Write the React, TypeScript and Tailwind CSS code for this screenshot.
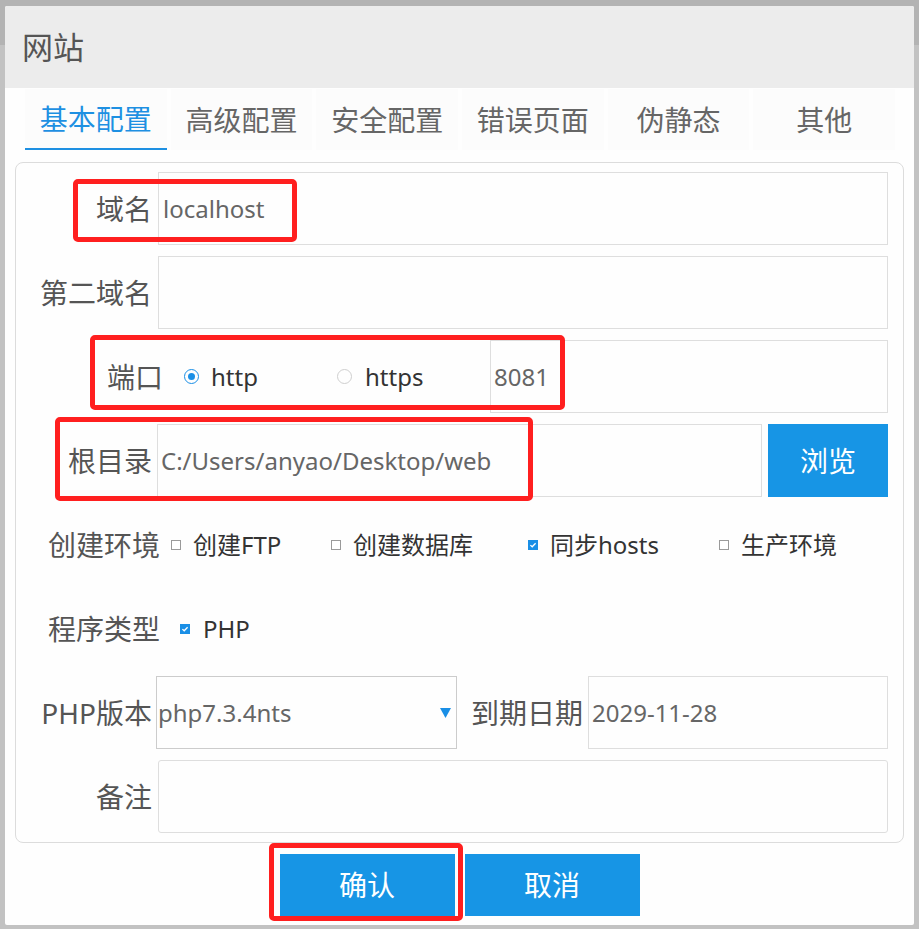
import React from 'react';

const tabs = ['基本配置', '高级配置', '安全配置', '错误页面', '伪静态', '其他'];

const Field: React.FC<{ value?: string; className?: string }> = ({ value = '', className = '' }) => (
  <div className={`h-full flex items-center pl-[3px] border border-[#dedede] bg-[#fefefe] text-[24px] text-[#666] ${className}`}>
    {value}
  </div>
);

const Label: React.FC<{ text: string; className: string }> = ({ text, className }) => (
  <div className={`shrink-0 text-right text-[28px] text-[#555] ${className}`}>{text}</div>
);

const Check: React.FC<{ on?: boolean }> = ({ on }) =>
  on ? (
    <span className="w-[10px] h-[10px] bg-[#1a8fe6] flex items-center justify-center shrink-0">
      <svg width="8" height="8" viewBox="0 0 8 8">
        <path d="M1.4 4.1 L3.2 5.8 L6.6 2.3" stroke="white" strokeWidth="1.3" fill="none" />
      </svg>
    </span>
  ) : (
    <span className="w-[10px] h-[10px] border border-[#9a9a9a] bg-white shrink-0" />
  );

const Radio: React.FC<{ on?: boolean }> = ({ on }) => (
  <span
    className={`w-[15px] h-[15px] rounded-full border flex items-center justify-center shrink-0 ${
      on ? 'border-[#1a8fe6]' : 'border-[#cfcfcf]'
    }`}
  >
    {on && <span className="w-[7px] h-[7px] rounded-full bg-[#1a8fe6]" />}
  </span>
);

const envs = [
  { text: '创建FTP', on: false, w: 'w-[160px]' },
  { text: '创建数据库', on: false, w: 'w-[197px]' },
  { text: '同步hosts', on: true, w: 'w-[191px]' },
  { text: '生产环境', on: false, w: 'w-[150px]' },
];

export default function App() {
  return (
    <div className="relative w-[919px] h-[929px] pt-[6px] pl-[5px] bg-[linear-gradient(#b3b3b3_45px,#c2c2c2_45px)] font-['Noto_Sans','Noto_Sans_CJK_SC',sans-serif] overflow-hidden">
      <div className="w-[909px] h-[919px] bg-[#fefefe] rounded-[2px] flex flex-col">
        {/* title */}
        <div className="h-[82px] bg-[#ececec] flex items-center pl-[17px] text-[31px] text-[#555] rounded-t-[2px]">
          网站
        </div>

        {/* tabs */}
        <div className="h-[62px] flex gap-[4px] pl-[20px] pr-[19px] pt-[1px]">
          {tabs.map((t, i) => (
            <div
              key={t}
              className={`flex-1 flex items-center justify-center text-[28px] bg-[#fcfcfc] ${
                i === 0 ? 'text-[#1e90e2] border-b-2 border-[#1e90e2]' : 'text-[#666]'
              }`}
            >
              {t}
            </div>
          ))}
        </div>

        {/* form panel */}
        <div className="mt-[12px] mx-[10px] border border-[#dcdcdc] rounded-[8px] pt-[9px] pb-[9px] pr-[15px] flex flex-col gap-[11px]">
          <div className="h-[73px] flex items-center">
            <Label text="域名" className="w-[142px] pr-[6px]" />
            <Field value="localhost" className="flex-1 pl-[4px]" />
          </div>

          <div className="h-[73px] flex items-center">
            <Label text="第二域名" className="w-[142px] pr-[6px]" />
            <Field className="flex-1" />
          </div>

          <div className="h-[73px] flex items-center">
            <Label text="端口" className="w-[168px] pr-[21px]" />
            <div className="w-[153px] flex items-center gap-[12px] text-[24px] text-[#333]">
              <Radio on />
              http
            </div>
            <div className="w-[153px] flex items-center gap-[13px] text-[24px] text-[#333]">
              <Radio />
              https
            </div>
            <Field value="8081" className="flex-1" />
          </div>

          <div className="h-[73px] flex items-center">
            <Label text="根目录" className="w-[141px] pr-[5px]" />
            <Field value="C:/Users/anyao/Desktop/web" className="w-[605px] pl-[2px]" />
            <button className="ml-[6px] flex-1 h-full bg-[#1795e5] text-white text-[28px]">浏览</button>
          </div>

          <div className="h-[73px] flex items-center">
            <Label text="创建环境" className="w-[155px] pr-[11px]" />
            {envs.map((e) => (
              <div key={e.text} className={`${e.w} flex items-center gap-[12px] text-[24px] text-[#333]`}>
                <Check on={e.on} />
                {e.text}
              </div>
            ))}
          </div>

          <div className="h-[73px] flex items-center">
            <Label text="程序类型" className="w-[164px] pr-[20px]" />
            <div className="flex items-center gap-[13px] text-[24px] text-[#333]">
              <Check on />
              PHP
            </div>
          </div>

          <div className="h-[73px] flex items-center">
            <Label text="PHP版本" className="w-[140px] pr-[4px]" />
            <div className="w-[301px] h-full border border-[#cccccc] flex items-center justify-between pl-[1px] pr-[5px] text-[24px] text-[#666]">
              php7.3.4nts
              <svg width="11" height="10" viewBox="0 0 11 10">
                <path d="M0 0 H11 L5.5 10 Z" fill="#1a8fe6" />
              </svg>
            </div>
            <Label text="到期日期" className="ml-[14px] w-[112px]" />
            <Field value="2029-11-28" className="ml-[5px] flex-1 pl-[3px]" />
          </div>

          <div className="h-[73px] flex items-center">
            <Label text="备注" className="w-[142px] pr-[6px]" />
            <Field className="flex-1 rounded-[3px]" />
          </div>
        </div>

        {/* actions */}
        <div className="mt-[11px] flex justify-center gap-[10px]">
          <button className="w-[175px] h-[62px] bg-[#1795e5] text-white text-[28px]">确认</button>
          <button className="w-[175px] h-[62px] bg-[#1795e5] text-white text-[28px]">取消</button>
        </div>
      </div>

      {/* red annotation frames */}
      <div className="absolute left-[73px] top-[179px] w-[224px] h-[63px] border-[5px] border-[#ff1f1f] rounded-[5px]" />
      <div className="absolute left-[90px] top-[335px] w-[475px] h-[75px] border-[5px] border-[#ff1f1f] rounded-[5px]" />
      <div className="absolute left-[55px] top-[417px] w-[478px] h-[84px] border-[5px] border-[#ff1f1f] rounded-[5px]" />
      <div className="absolute left-[269px] top-[843px] w-[194px] h-[78px] border-[5px] border-[#ff1f1f] rounded-[5px]" />
    </div>
  );
}
